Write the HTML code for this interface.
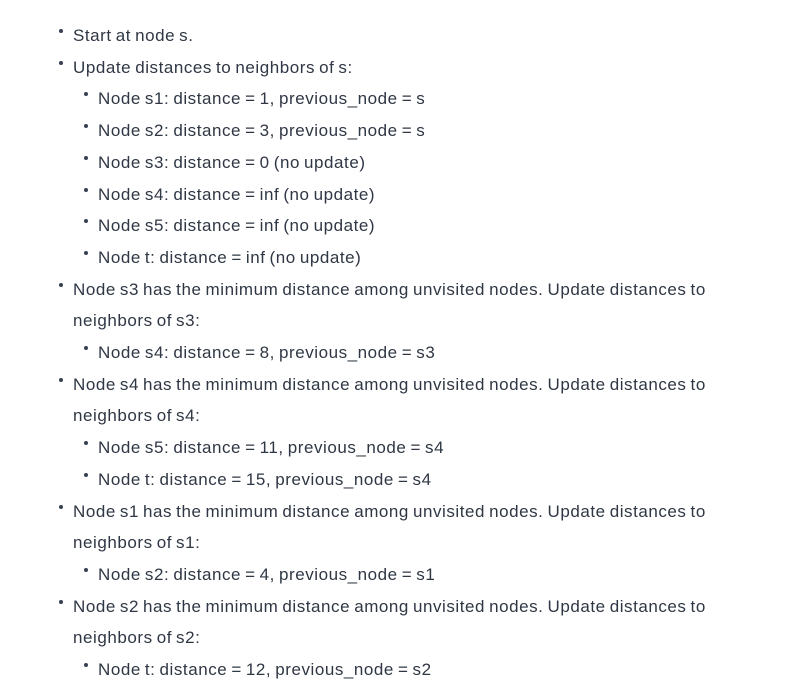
<!DOCTYPE html>
<html><head><meta charset="utf-8"><style>
body{margin:0;background:#fff;width:810px;height:683px;overflow:hidden;font-family:"Liberation Sans",sans-serif;color:#2f3744;font-size:17px;}
.l{position:absolute;white-space:nowrap;line-height:20px;letter-spacing:0.55px;word-spacing:-1.2px}
.b{position:absolute;width:4px;height:4px;border-radius:50%;background:#374151}
</style></head><body>
<div id="c"></div>
<script>
const lines=[
[0,"Start at node s."],
[0,"Update distances to neighbors of s:"],
[1,"Node s1: distance = 1, previous_node = s"],
[1,"Node s2: distance = 3, previous_node = s"],
[1,"Node s3: distance = 0 (no update)"],
[1,"Node s4: distance = inf (no update)"],
[1,"Node s5: distance = inf (no update)"],
[1,"Node t: distance = inf (no update)"],
[0,"Node s3 has the minimum distance among unvisited nodes. Update distances to"],
[2,"neighbors of s3:"],
[1,"Node s4: distance = 8, previous_node = s3"],
[0,"Node s4 has the minimum distance among unvisited nodes. Update distances to"],
[2,"neighbors of s4:"],
[1,"Node s5: distance = 11, previous_node = s4"],
[1,"Node t: distance = 15, previous_node = s4"],
[0,"Node s1 has the minimum distance among unvisited nodes. Update distances to"],
[2,"neighbors of s1:"],
[1,"Node s2: distance = 4, previous_node = s1"],
[0,"Node s2 has the minimum distance among unvisited nodes. Update distances to"],
[2,"neighbors of s2:"],
[1,"Node t: distance = 12, previous_node = s2"]];
let h="";
lines.forEach((l,i)=>{const y=35+i*31.7;const x=l[0]==1?98:73;
if(l[0]!=2)h+=`<div class="b" style="left:${x-14}px;top:${y-6}px"></div>`;
h+=`<div class="l" style="left:${x}px;top:${y-9}px">${l[1]}</div>`;});
document.getElementById("c").innerHTML=h;
</script>
</body></html>
